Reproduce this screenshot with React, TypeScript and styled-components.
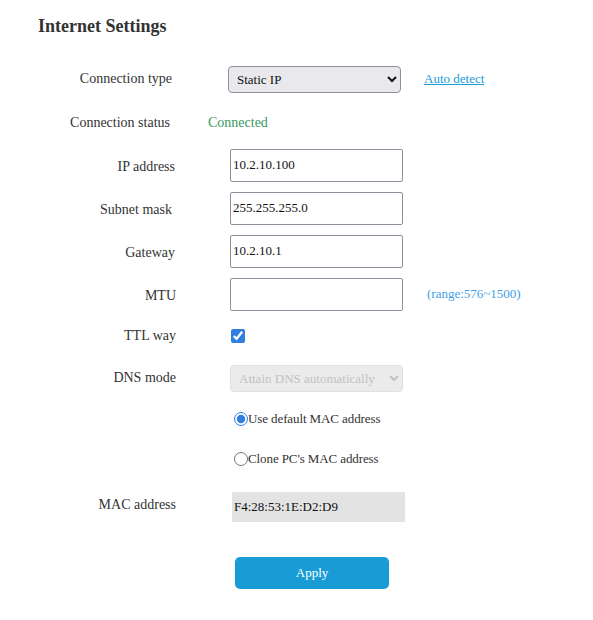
import React, { FC } from 'react';
import styled, { createGlobalStyle } from 'styled-components';

const GlobalStyle = createGlobalStyle`
  body {
    margin: 0;
    background: #ffffff;
    font-family: "Liberation Serif", "Times New Roman", serif;
    color: #333333;
  }
`;

const Page = styled.div`
  padding: 0 38px;
  font-family: "Liberation Serif", "Times New Roman", serif;
`;

const Title = styled.h2`
  margin: 0;
  height: 57px;
  line-height: 52px;
  font-size: 18px;
  font-weight: bold;
  color: #333333;
`;

const Row = styled.div<{ $h: number }>`
  display: flex;
  align-items: center;
  height: ${(p) => p.$h}px;
`;

const Label = styled.div<{ $pad?: number }>`
  width: 138px;
  flex-shrink: 0;
  box-sizing: border-box;
  padding-right: ${(p) => p.$pad ?? 0}px;
  text-align: right;
  font-size: 14px;
  color: #333333;
`;

const Field = styled.div<{ $ml: number; $mt?: number }>`
  display: flex;
  align-items: center;
  margin-left: ${(p) => p.$ml}px;
  margin-top: ${(p) => p.$mt ?? 0}px;
`;

const Select = styled.select`
  width: 173px;
  height: 27px;
  padding: 0 4px;
  border: 1px solid #8f8f9d;
  border-radius: 4px;
  background: #e9e8ed;
  font-family: "Liberation Serif", "Times New Roman", serif;
  font-size: 13px;
  color: #111111;
  &:disabled {
    background: #e3e3e3;
    border-color: #d4d4d4;
    color: #a8a8a8;
  }
`;

const TextInput = styled.input`
  width: 173px;
  height: 33px;
  box-sizing: border-box;
  padding: 0 2px;
  border: 1px solid #8f8f9d;
  border-radius: 2px;
  font-family: "Liberation Serif", "Times New Roman", serif;
  font-size: 13px;
  color: #111111;
  background: #ffffff;
`;

const AutoLink = styled.a`
  margin-left: 23px;
  font-size: 13px;
  color: #1a9bd7;
  text-decoration: underline;
  cursor: pointer;
`;

const Status = styled.span`
  font-size: 14px;
  color: #3a9a62;
`;

const Hint = styled.span`
  margin-left: 24px;
  font-size: 13px;
  color: #3d9fe8;
`;

const Check = styled.input`
  width: 14px;
  height: 14px;
  margin: 0;
  accent-color: #2f7ee0;
`;

const RadioLabel = styled.label`
  display: flex;
  align-items: center;
  font-size: 13px;
  letter-spacing: -0.1px;
  color: #333333;
`;

const Radio = styled.input`
  width: 14px;
  height: 14px;
  margin: 0;
  accent-color: #2f7ee0;
`;

const MacBox = styled.div`
  width: 173px;
  height: 30px;
  box-sizing: border-box;
  padding: 0 2px;
  display: flex;
  align-items: center;
  background: #e3e3e3;
  font-size: 13px;
  color: #111111;
`;

const ApplyButton = styled.button`
  width: 154px;
  height: 32px;
  border: none;
  border-radius: 5px;
  background: #199cd6;
  color: #ffffff;
  font-family: "Liberation Serif", "Times New Roman", serif;
  font-size: 13px;
  cursor: pointer;
`;

const App: FC = () => (
  <Page>
    <GlobalStyle />
    <Title>Internet Settings</Title>
    <Row $h={44}>
      <Label $pad={4}>Connection type</Label>
      <Field $ml={52}>
        <Select defaultValue="static">
          <option value="static">Static IP</option>
          <option value="dhcp">Dynamic IP</option>
          <option value="pppoe">PPPoE</option>
        </Select>
        <AutoLink>Auto detect</AutoLink>
      </Field>
    </Row>
    <Row $h={44}>
      <Label $pad={6}>Connection status</Label>
      <Field $ml={32}>
        <Status>Connected</Status>
      </Field>
    </Row>
    <Row $h={44}>
      <Label $pad={1}>IP address</Label>
      <Field $ml={54} $mt={-4}>
        <TextInput defaultValue="10.2.10.100" />
      </Field>
    </Row>
    <Row $h={42}>
      <Label $pad={4}>Subnet mask</Label>
      <Field $ml={54} $mt={-4}>
        <TextInput defaultValue="255.255.255.0" />
      </Field>
    </Row>
    <Row $h={44}>
      <Label $pad={1}>Gateway</Label>
      <Field $ml={54} $mt={-4}>
        <TextInput defaultValue="10.2.10.1" />
      </Field>
    </Row>
    <Row $h={42}>
      <Label $pad={-9}>MTU</Label>
      <Field $ml={54} $mt={-4}>
        <TextInput defaultValue="" />
        <Hint>(range:576~1500)</Hint>
      </Field>
    </Row>
    <Row $h={38}>
      <Label $pad={-6}>TTL way</Label>
      <Field $ml={55}>
        <Check type="checkbox" defaultChecked />
      </Field>
    </Row>
    <Row $h={46}>
      <Label $pad={-3}>DNS mode</Label>
      <Field $ml={54}>
        <Select disabled defaultValue="auto">
          <option value="auto">Attain DNS automatically</option>
        </Select>
      </Field>
    </Row>
    <Row $h={36}>
      <Label />
      <Field $ml={58}>
        <RadioLabel>
          <Radio type="radio" name="mac" defaultChecked />
          Use default MAC address
        </RadioLabel>
      </Field>
    </Row>
    <Row $h={44}>
      <Label />
      <Field $ml={58}>
        <RadioLabel>
          <Radio type="radio" name="mac" />
          Clone PC's MAC address
        </RadioLabel>
      </Field>
    </Row>
    <Row $h={48}>
      <Label $pad={0}>MAC address</Label>
      <Field $ml={56} $mt={4}>
        <MacBox>F4:28:53:1E:D2:D9</MacBox>
      </Field>
    </Row>
    <Row $h={90}>
      <Label />
      <Field $ml={59} $mt={-2}>
        <ApplyButton>Apply</ApplyButton>
      </Field>
    </Row>
  </Page>
);

export default App;
